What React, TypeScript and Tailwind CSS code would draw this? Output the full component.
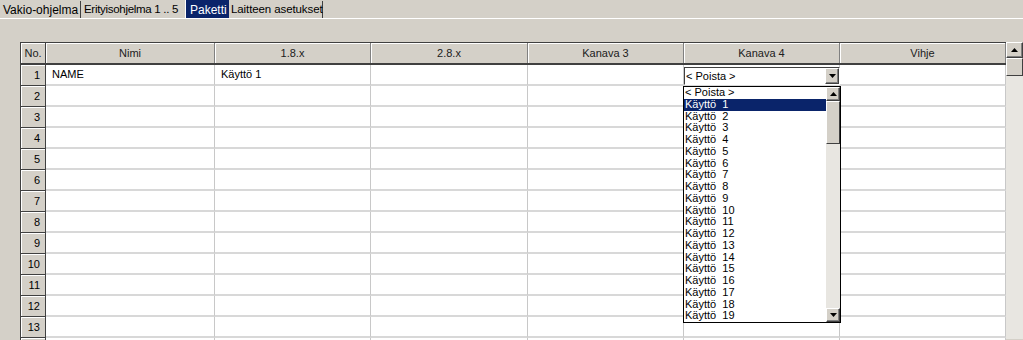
import React from "react"

const cols = [
  { name: "Nimi", w: "w-[169px]" },
  { name: "1.8.x", w: "w-[156px]" },
  { name: "2.8.x", w: "w-[157px]" },
  { name: "Kanava 3", w: "w-[156px]" },
  { name: "Kanava 4", w: "w-[156px]" },
  { name: "Vihje", w: "w-[166px]" },
]

const rows = Array.from({ length: 14 }, (_, i) => i + 1)
const options = ["< Poista >", ...Array.from({ length: 19 }, (_, i) => `Käyttö  ${i + 1}`)]

function Arrow({ down }: { down?: boolean }) {
  return (
    <svg width="7" height="4" viewBox="0 0 7 4">
      <path d={down ? "M0 0h7L3.5 4z" : "M0 4h7L3.5 0z"} fill="#000" />
    </svg>
  )
}

function ScrollButton({ down, h }: { down?: boolean; h: string }) {
  return (
    <div
      className={`${h} w-full flex items-center justify-center bg-[#d4d0c8] border border-t-white border-l-white border-r-[#404040] border-b-[#404040] shadow-[inset_-1px_-1px_0_#808080]`}
    >
      <Arrow down={down} />
    </div>
  )
}

export default function App() {
  return (
    <div
      className="relative w-[1023px] h-[340px] overflow-hidden bg-[#d4d0c8] text-black text-[11px]"
      style={{ fontFamily: '"Liberation Sans", Arial, sans-serif' }}
    >
      {/* tabs */}
      <div className="flex items-end h-[19px] pl-[3px] text-[12px] border-b border-white whitespace-nowrap">
        <div className="shrink-0 w-[78px] h-[17px] flex items-center border-r border-[#404040]">Vakio-ohjelma</div>
        <div className="shrink-0 w-[104px] h-[17px] pl-[3px] flex items-center text-[11.5px] tracking-[-0.3px]">Erityisohjelma 1 .. 5</div>
        <div className="shrink-0 w-[44px] h-[18px] pl-[4px] flex items-start pt-[1px] bg-[#0a246a] text-white border-l border-white">Paketti</div>
        <div className="shrink-0 w-[94px] h-[17px] pl-[2px] flex items-center border-r border-[#404040] text-[11.5px] tracking-[-0.1px]">Laitteen asetukset</div>
      </div>

      {/* grid */}
      <div className="flex pl-[20px] pt-[23px]">
        <div className="flex flex-col border-l border-t border-[#404040]">
          <div className="flex h-[22px] border-b-2 border-[#404040] text-[#202020]">
            <div className="w-[25px] flex items-center justify-center bg-[#d4d0c8] border-r border-[#404040] shadow-[inset_1px_1px_0_#fff]">No.</div>
            {cols.map((c) => (
              <div
                key={c.name}
                className={`${c.w} flex items-center justify-center bg-[#d4d0c8] border-r border-[#808080] shadow-[inset_1px_1px_0_#fff]`}
              >
                {c.name}
              </div>
            ))}
          </div>
          {rows.map((r) => (
            <div key={r} className="flex h-[21px]">
              <div className="w-[25px] flex items-center justify-end pr-[5px] bg-[#d4d0c8] border-r border-b border-[#404040] shadow-[inset_1px_1px_0_#fff]">
                {r}
              </div>
              {cols.map((c, ci) => (
                <div
                  key={c.name}
                  className={`${c.w} flex items-center pl-[6px] bg-white border-r border-[#c8c8c8] border-b-2 border-b-[#d8d8d8]`}
                >
                  {r === 1 && ci === 0 ? "NAME" : r === 1 && ci === 1 ? "Käyttö 1" : ""}
                </div>
              ))}
            </div>
          ))}
        </div>

        {/* main scrollbar */}
        <div className="w-[17px] h-[297px] flex flex-col bg-[#e8e6e1]">
          <ScrollButton h="h-[16px]" />
          <div className="h-[18px] bg-[#d4d0c8] border border-t-white border-l-white border-r-[#404040] border-b-[#404040]" />
        </div>
      </div>

      {/* combo box */}
      <div className="absolute left-[684px] top-[67px] w-[156px] h-[18px] flex bg-white border border-t-[#404040] border-l-[#404040] border-r-white border-b-white">
        <div className="flex-1 flex items-center pl-[1px]">&lt; Poista &gt;</div>
        <div className="w-[14px]">
          <ScrollButton down h="h-full" />
        </div>
      </div>

      {/* drop list */}
      <div className="absolute left-[683px] top-[86px] w-[158px] h-[237px] flex bg-white border border-black">
        <div className="flex-1 flex flex-col">
          {options.map((o, i) => (
            <div
              key={o}
              className={`h-[11.75px] leading-[11.75px] pl-[1px] whitespace-pre ${i === 1 ? "bg-[#0a246a] text-white" : ""}`}
            >
              {o}
            </div>
          ))}
        </div>
        <div className="w-[14px] flex flex-col bg-[#e8e6e1]">
          <ScrollButton h="h-[14px]" />
          <div className="h-[43px] bg-[#d4d0c8] border border-t-white border-l-white border-r-[#404040] border-b-[#404040]" />
          <div className="flex-1" />
          <ScrollButton down h="h-[14px]" />
        </div>
      </div>
    </div>
  )
}
